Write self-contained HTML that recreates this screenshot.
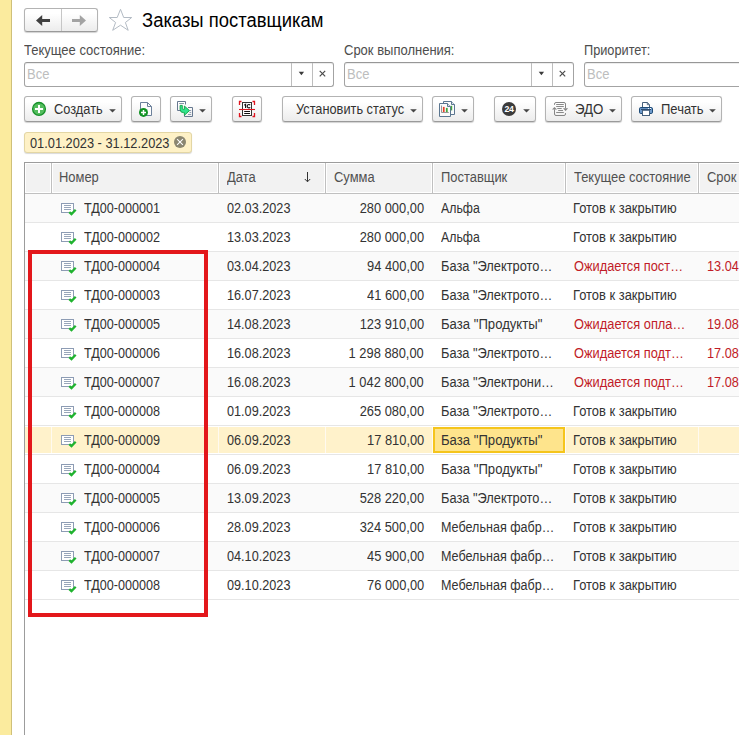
<!DOCTYPE html>
<html><head><meta charset="utf-8"><title>Заказы поставщикам</title>
<style>
*{box-sizing:border-box;margin:0;padding:0}
html,body{width:739px;height:735px;overflow:hidden;background:#fff}
body{font-family:"Liberation Sans",sans-serif;font-size:13px;color:#333;position:relative}
.abs{position:absolute}
.x{display:inline-block;font-size:14px;letter-spacing:0;transform-origin:0 50%;white-space:nowrap}
.xr{transform-origin:100% 50%}
#side{left:0;top:0;width:12px;height:735px;background:#fbeb9e;border-right:1px solid #cfc07a}
.btn{position:absolute;top:96px;height:26px;border:1px solid #b3b3b3;border-bottom-color:#9a9a9a;border-radius:3px;background:linear-gradient(#ffffff 20%,#ececec);box-shadow:0 1px 1px rgba(0,0,0,.18);font-size:13px;color:#333;white-space:nowrap}
.btn .lbl{position:absolute;top:5px;line-height:15px;letter-spacing:-0.12px}
.lab{position:absolute;font-size:13px;color:#4d4d4d;line-height:15px;white-space:nowrap;letter-spacing:0}
.inp{position:absolute;top:62px;height:25px;border:1px solid #a3a3a3;border-top-color:#979797;border-radius:3px;background:#fff;box-shadow:inset 0 1px 0 rgba(0,0,0,.07)}
.inp .ph{position:absolute;left:2px;top:4px;color:#bdbdbd;font-size:13px;line-height:15px}
.inp .dv{position:absolute;top:0;width:1px;height:23px;background:#bdbdbd}
#title{left:141.700px;top:9px;font-size:20px;transform:scaleX(.922);transform-origin:0 50%;line-height:22px;color:#000;white-space:nowrap}
#tag{left:24px;top:132px;width:168px;height:21px;background:#fef1c6;border:1px solid #e3d6a4;border-radius:3px;font-size:13px;line-height:21px;padding-left:5px;color:#333;white-space:nowrap;box-shadow:0 1px 1px rgba(0,0,0,.15);letter-spacing:-0.1px}
#tbl{left:24px;top:162px;width:715px;height:573px;border-left:1px solid #9c9c9c;border-top:1px solid #9c9c9c;overflow:hidden}
#hdr{position:absolute;left:0;top:0;width:714px;height:31px;background:#f2f2f2;border-bottom:1px solid #c0c0c0}
.h{position:absolute;top:0;height:30px;border-right:1px solid #c0c0c0;box-shadow:inset 1px 1px 0 #fff,inset -1px -1px 0 #fff;font-size:13px;line-height:29px;color:#505050;padding-left:8px;white-space:nowrap;overflow:hidden;letter-spacing:-0.05px}
.row{position:absolute;left:25px;width:714px;height:29px;border-bottom:1px solid #e6e6e6;background:#fff;font-size:13px;line-height:28px;color:#333;white-space:nowrap}
.row.alt{background:#fafafa}
.c{position:absolute;top:0;height:28px;overflow:hidden;letter-spacing:-0.1px}
.c1{left:27px;width:166px}
.c1 .ic{position:absolute;left:9px;top:9px}
.c1 .t{position:absolute;left:32px;letter-spacing:-0.24px}
.c2{left:194px;width:106px;padding-left:8px;letter-spacing:-0.18px}
.c3{left:301px;width:106px;text-align:right;padding-right:8px;letter-spacing:-0.07px}
.c4{left:408px;width:132px;padding-left:8px}
.c5{left:541px;width:133px;padding-left:7px}
.c6{left:674px;width:40px;padding-left:8px;letter-spacing:-0.18px}
.red{color:#c11c28}
.row.sel{background:#fff}
.row.sel .bg{position:absolute;left:0;top:1px;width:714px;height:26px;background:#fff2cb}
.row.sel .vl{position:absolute;top:1px;width:1px;height:26px;background:#fffaf0}
.sel .cur{background:#fee48c;border:2px solid #f5c51c;top:1px;height:26px;line-height:22px;padding-left:6px}
#redbox{left:28px;top:250px;width:180px;height:367px;border:4px solid #e3171b}
</style></head><body>
<div id="side" class="abs"></div>

<!-- nav buttons -->
<div class="btn" style="left:24px;top:8px;width:74px;height:24px">
 <div class="abs" style="left:36px;top:0;width:1px;height:22px;background:#c6c6c6"></div>
</div>
<div id="title" class="abs">Заказы поставщикам</div>

<!-- filters -->
<div class="lab" style="left:24px;top:43px"><span class="x" style="transform:scaleX(0.9286)">Текущее состояние:</span></div>
<div class="lab" style="left:344px;top:43px"><span class="x" style="transform:scaleX(0.9286)">Срок выполнения:</span></div>
<div class="lab" style="left:584px;top:43px"><span class="x" style="transform:scaleX(0.9100)">Приоритет:</span></div>

<div class="inp" style="left:24px;width:310px"><span class="ph"><span class="x" style="transform:scaleX(0.9288)">Все</span></span><div class="dv" style="left:266px"></div><div class="dv" style="left:287px"></div></div>
<div class="inp" style="left:344px;width:230px"><span class="ph"><span class="x" style="transform:scaleX(0.9288)">Все</span></span><div class="dv" style="left:186px"></div><div class="dv" style="left:207px"></div></div>
<div class="inp" style="left:584px;width:170px"><span class="ph"><span class="x" style="transform:scaleX(0.9288)">Все</span></span></div>

<!-- toolbar -->
<div class="btn" style="left:24px;width:98px"><span class="lbl" style="left:28.500px"><span class="x" style="transform:scaleX(0.9148)">Создать</span></span></div>
<div class="btn" style="left:131px;width:30px"></div>
<div class="btn" style="left:170px;width:42px"></div>
<div class="btn" style="left:232px;width:30px"></div>
<div class="btn" style="left:282px;width:141px"><span class="lbl" style="left:13px"><span class="x" style="transform:scaleX(0.9125)">Установить статус</span></span></div>
<div class="btn" style="left:432px;width:42px"></div>
<div class="btn" style="left:494px;width:42px"></div>
<div class="btn" style="left:545px;width:77px"><span class="lbl" style="left:28.500px"><span class="x" style="transform:scaleX(0.9486)">ЭДО</span></span></div>
<div class="btn" style="left:631px;width:91px"><span class="lbl" style="left:29px"><span class="x" style="transform:scaleX(0.9285)">Печать</span></span></div>

<div id="tag" class="abs"><span class="x" style="transform:scaleX(0.9142)">01.01.2023 - 31.12.2023</span></div>

<!-- table -->
<div id="tbl" class="abs">
 <div id="hdr">
  <div class="h" style="left:0;width:27px"></div>
  <div class="h" style="left:27px;width:167px;padding-left:7.400px"><span class="x" style="transform:scaleX(0.9239)">Номер</span></div>
  <div class="h" style="left:194px;width:107px"><span class="x" style="transform:scaleX(0.9236)">Дата</span></div>
  <div class="h" style="left:301px;width:107px"><span class="x" style="transform:scaleX(0.9241)">Сумма</span></div>
  <div class="h" style="left:408px;width:133px"><span class="x" style="transform:scaleX(0.9230)">Поставщик</span></div>
  <div class="h" style="left:541px;width:133px"><span class="x" style="transform:scaleX(0.9223)">Текущее состояние</span></div>
  <div class="h" style="left:674px;width:60px"><span class="x" style="transform:scaleX(0.9241)">Срок</span></div>
 </div>
</div>
<div class="row alt" style="top:194px"><span class="c c1"><svg class="ic" width="16" height="13" viewBox="0 0 16 13"><rect x="0.500" y="0.500" width="12" height="9" fill="#fff" stroke="#8d9cb4"/><path d="M3 2.500h7M3 4.500h7M3 6.500h7" stroke="#98a6ba" fill="none"/><path d="M8.300 9.100l2.200 2 4.200-4.300" stroke="#1fb32e" stroke-width="2.300" fill="none"/></svg><span class="t"><span class="x" style="transform:scaleX(0.9001)">ТД00-000001</span></span></span><span class="c c2"><span class="x" style="transform:scaleX(0.9055)">02.03.2023</span></span><span class="c c3"><span class="x xr" style="transform:scaleX(0.9197)">280 000,00</span></span><span class="c c4"><span class="x" style="transform:scaleX(0.8789)">Альфа</span></span><span class="c c5"><span class="x" style="transform:scaleX(0.9232)">Готов к закрытию</span></span><span class="c c6"></span></div>
<div class="row" style="top:223px"><span class="c c1"><svg class="ic" width="16" height="13" viewBox="0 0 16 13"><rect x="0.500" y="0.500" width="12" height="9" fill="#fff" stroke="#8d9cb4"/><path d="M3 2.500h7M3 4.500h7M3 6.500h7" stroke="#98a6ba" fill="none"/><path d="M8.300 9.100l2.200 2 4.200-4.300" stroke="#1fb32e" stroke-width="2.300" fill="none"/></svg><span class="t"><span class="x" style="transform:scaleX(0.9001)">ТД00-000002</span></span></span><span class="c c2"><span class="x" style="transform:scaleX(0.9055)">13.03.2023</span></span><span class="c c3"><span class="x xr" style="transform:scaleX(0.9197)">280 000,00</span></span><span class="c c4"><span class="x" style="transform:scaleX(0.8789)">Альфа</span></span><span class="c c5"><span class="x" style="transform:scaleX(0.9232)">Готов к закрытию</span></span><span class="c c6"></span></div>
<div class="row alt" style="top:252px"><span class="c c1"><svg class="ic" width="16" height="13" viewBox="0 0 16 13"><rect x="0.500" y="0.500" width="12" height="9" fill="#fff" stroke="#8d9cb4"/><path d="M3 2.500h7M3 4.500h7M3 6.500h7" stroke="#98a6ba" fill="none"/><path d="M8.300 9.100l2.200 2 4.200-4.300" stroke="#1fb32e" stroke-width="2.300" fill="none"/></svg><span class="t"><span class="x" style="transform:scaleX(0.9001)">ТД00-000004</span></span></span><span class="c c2"><span class="x" style="transform:scaleX(0.9055)">03.04.2023</span></span><span class="c c3"><span class="x xr" style="transform:scaleX(0.9195)">94 400,00</span></span><span class="c c4"><span class="x" style="transform:scaleX(0.9162)">База &quot;Электрото…</span></span><span class="c c5 red" style="padding-left:7.700px"><span class="x" style="transform:scaleX(0.9168)">Ожидается пост…</span></span><span class="c c6 red"><span class="x" style="transform:scaleX(0.9081)">13.04</span></span></div>
<div class="row" style="top:281px"><span class="c c1"><svg class="ic" width="16" height="13" viewBox="0 0 16 13"><rect x="0.500" y="0.500" width="12" height="9" fill="#fff" stroke="#8d9cb4"/><path d="M3 2.500h7M3 4.500h7M3 6.500h7" stroke="#98a6ba" fill="none"/><path d="M8.300 9.100l2.200 2 4.200-4.300" stroke="#1fb32e" stroke-width="2.300" fill="none"/></svg><span class="t"><span class="x" style="transform:scaleX(0.9001)">ТД00-000003</span></span></span><span class="c c2"><span class="x" style="transform:scaleX(0.9055)">16.07.2023</span></span><span class="c c3"><span class="x xr" style="transform:scaleX(0.9195)">41 600,00</span></span><span class="c c4"><span class="x" style="transform:scaleX(0.9162)">База &quot;Электрото…</span></span><span class="c c5"><span class="x" style="transform:scaleX(0.9232)">Готов к закрытию</span></span><span class="c c6"></span></div>
<div class="row alt" style="top:310px"><span class="c c1"><svg class="ic" width="16" height="13" viewBox="0 0 16 13"><rect x="0.500" y="0.500" width="12" height="9" fill="#fff" stroke="#8d9cb4"/><path d="M3 2.500h7M3 4.500h7M3 6.500h7" stroke="#98a6ba" fill="none"/><path d="M8.300 9.100l2.200 2 4.200-4.300" stroke="#1fb32e" stroke-width="2.300" fill="none"/></svg><span class="t"><span class="x" style="transform:scaleX(0.9001)">ТД00-000005</span></span></span><span class="c c2"><span class="x" style="transform:scaleX(0.9055)">14.08.2023</span></span><span class="c c3"><span class="x xr" style="transform:scaleX(0.9197)">123 910,00</span></span><span class="c c4"><span class="x" style="transform:scaleX(0.9377)">База &quot;Продукты&quot;</span></span><span class="c c5 red" style="padding-left:7.700px"><span class="x" style="transform:scaleX(0.9170)">Ожидается опла…</span></span><span class="c c6 red"><span class="x" style="transform:scaleX(0.9081)">19.08</span></span></div>
<div class="row" style="top:339px"><span class="c c1"><svg class="ic" width="16" height="13" viewBox="0 0 16 13"><rect x="0.500" y="0.500" width="12" height="9" fill="#fff" stroke="#8d9cb4"/><path d="M3 2.500h7M3 4.500h7M3 6.500h7" stroke="#98a6ba" fill="none"/><path d="M8.300 9.100l2.200 2 4.200-4.300" stroke="#1fb32e" stroke-width="2.300" fill="none"/></svg><span class="t"><span class="x" style="transform:scaleX(0.9001)">ТД00-000006</span></span></span><span class="c c2"><span class="x" style="transform:scaleX(0.9055)">16.08.2023</span></span><span class="c c3"><span class="x xr" style="transform:scaleX(0.9191)">1 298 880,00</span></span><span class="c c4"><span class="x" style="transform:scaleX(0.9162)">База &quot;Электрото…</span></span><span class="c c5 red" style="padding-left:7.700px"><span class="x" style="transform:scaleX(0.9169)">Ожидается подт…</span></span><span class="c c6 red"><span class="x" style="transform:scaleX(0.9081)">17.08</span></span></div>
<div class="row alt" style="top:368px"><span class="c c1"><svg class="ic" width="16" height="13" viewBox="0 0 16 13"><rect x="0.500" y="0.500" width="12" height="9" fill="#fff" stroke="#8d9cb4"/><path d="M3 2.500h7M3 4.500h7M3 6.500h7" stroke="#98a6ba" fill="none"/><path d="M8.300 9.100l2.200 2 4.200-4.300" stroke="#1fb32e" stroke-width="2.300" fill="none"/></svg><span class="t"><span class="x" style="transform:scaleX(0.9001)">ТД00-000007</span></span></span><span class="c c2"><span class="x" style="transform:scaleX(0.9055)">16.08.2023</span></span><span class="c c3"><span class="x xr" style="transform:scaleX(0.9191)">1 042 800,00</span></span><span class="c c4"><span class="x" style="transform:scaleX(0.9163)">База &quot;Электрони…</span></span><span class="c c5 red" style="padding-left:7.700px"><span class="x" style="transform:scaleX(0.9169)">Ожидается подт…</span></span><span class="c c6 red"><span class="x" style="transform:scaleX(0.9081)">17.08</span></span></div>
<div class="row" style="top:397px"><span class="c c1"><svg class="ic" width="16" height="13" viewBox="0 0 16 13"><rect x="0.500" y="0.500" width="12" height="9" fill="#fff" stroke="#8d9cb4"/><path d="M3 2.500h7M3 4.500h7M3 6.500h7" stroke="#98a6ba" fill="none"/><path d="M8.300 9.100l2.200 2 4.200-4.300" stroke="#1fb32e" stroke-width="2.300" fill="none"/></svg><span class="t"><span class="x" style="transform:scaleX(0.9001)">ТД00-000008</span></span></span><span class="c c2"><span class="x" style="transform:scaleX(0.9055)">01.09.2023</span></span><span class="c c3"><span class="x xr" style="transform:scaleX(0.9197)">265 080,00</span></span><span class="c c4"><span class="x" style="transform:scaleX(0.9162)">База &quot;Электрото…</span></span><span class="c c5"><span class="x" style="transform:scaleX(0.9232)">Готов к закрытию</span></span><span class="c c6"></span></div>
<div class="row alt sel" style="top:426px"><div class="bg"></div><div class="vl" style="left:26px"></div><div class="vl" style="left:193px"></div><div class="vl" style="left:300px"></div><div class="vl" style="left:407px"></div><div class="vl" style="left:540px"></div><div class="vl" style="left:673px"></div><span class="c c1"><svg class="ic" width="16" height="13" viewBox="0 0 16 13"><rect x="0.500" y="0.500" width="12" height="9" fill="#fff" stroke="#8d9cb4"/><path d="M3 2.500h7M3 4.500h7M3 6.500h7" stroke="#98a6ba" fill="none"/><path d="M8.300 9.100l2.200 2 4.200-4.300" stroke="#1fb32e" stroke-width="2.300" fill="none"/></svg><span class="t"><span class="x" style="transform:scaleX(0.9001)">ТД00-000009</span></span></span><span class="c c2"><span class="x" style="transform:scaleX(0.9055)">06.09.2023</span></span><span class="c c3"><span class="x xr" style="transform:scaleX(0.9195)">17 810,00</span></span><span class="c c4 cur"><span class="x" style="transform:scaleX(0.9377)">База &quot;Продукты&quot;</span></span><span class="c c5"><span class="x" style="transform:scaleX(0.9232)">Готов к закрытию</span></span><span class="c c6"></span></div>
<div class="row" style="top:455px"><span class="c c1"><svg class="ic" width="16" height="13" viewBox="0 0 16 13"><rect x="0.500" y="0.500" width="12" height="9" fill="#fff" stroke="#8d9cb4"/><path d="M3 2.500h7M3 4.500h7M3 6.500h7" stroke="#98a6ba" fill="none"/><path d="M8.300 9.100l2.200 2 4.200-4.300" stroke="#1fb32e" stroke-width="2.300" fill="none"/></svg><span class="t"><span class="x" style="transform:scaleX(0.9001)">ТД00-000004</span></span></span><span class="c c2"><span class="x" style="transform:scaleX(0.9055)">06.09.2023</span></span><span class="c c3"><span class="x xr" style="transform:scaleX(0.9195)">17 810,00</span></span><span class="c c4"><span class="x" style="transform:scaleX(0.9377)">База &quot;Продукты&quot;</span></span><span class="c c5"><span class="x" style="transform:scaleX(0.9232)">Готов к закрытию</span></span><span class="c c6"></span></div>
<div class="row alt" style="top:484px"><span class="c c1"><svg class="ic" width="16" height="13" viewBox="0 0 16 13"><rect x="0.500" y="0.500" width="12" height="9" fill="#fff" stroke="#8d9cb4"/><path d="M3 2.500h7M3 4.500h7M3 6.500h7" stroke="#98a6ba" fill="none"/><path d="M8.300 9.100l2.200 2 4.200-4.300" stroke="#1fb32e" stroke-width="2.300" fill="none"/></svg><span class="t"><span class="x" style="transform:scaleX(0.9001)">ТД00-000005</span></span></span><span class="c c2"><span class="x" style="transform:scaleX(0.9055)">13.09.2023</span></span><span class="c c3"><span class="x xr" style="transform:scaleX(0.9197)">528 220,00</span></span><span class="c c4"><span class="x" style="transform:scaleX(0.9162)">База &quot;Электрото…</span></span><span class="c c5"><span class="x" style="transform:scaleX(0.9232)">Готов к закрытию</span></span><span class="c c6"></span></div>
<div class="row" style="top:513px"><span class="c c1"><svg class="ic" width="16" height="13" viewBox="0 0 16 13"><rect x="0.500" y="0.500" width="12" height="9" fill="#fff" stroke="#8d9cb4"/><path d="M3 2.500h7M3 4.500h7M3 6.500h7" stroke="#98a6ba" fill="none"/><path d="M8.300 9.100l2.200 2 4.200-4.300" stroke="#1fb32e" stroke-width="2.300" fill="none"/></svg><span class="t"><span class="x" style="transform:scaleX(0.9001)">ТД00-000006</span></span></span><span class="c c2"><span class="x" style="transform:scaleX(0.9055)">28.09.2023</span></span><span class="c c3"><span class="x xr" style="transform:scaleX(0.9197)">324 500,00</span></span><span class="c c4"><span class="x" style="transform:scaleX(0.8975)">Мебельная фабр…</span></span><span class="c c5"><span class="x" style="transform:scaleX(0.9232)">Готов к закрытию</span></span><span class="c c6"></span></div>
<div class="row alt" style="top:542px"><span class="c c1"><svg class="ic" width="16" height="13" viewBox="0 0 16 13"><rect x="0.500" y="0.500" width="12" height="9" fill="#fff" stroke="#8d9cb4"/><path d="M3 2.500h7M3 4.500h7M3 6.500h7" stroke="#98a6ba" fill="none"/><path d="M8.300 9.100l2.200 2 4.200-4.300" stroke="#1fb32e" stroke-width="2.300" fill="none"/></svg><span class="t"><span class="x" style="transform:scaleX(0.9001)">ТД00-000007</span></span></span><span class="c c2"><span class="x" style="transform:scaleX(0.9055)">04.10.2023</span></span><span class="c c3"><span class="x xr" style="transform:scaleX(0.9195)">45 900,00</span></span><span class="c c4"><span class="x" style="transform:scaleX(0.8975)">Мебельная фабр…</span></span><span class="c c5"><span class="x" style="transform:scaleX(0.9232)">Готов к закрытию</span></span><span class="c c6"></span></div>
<div class="row" style="top:571px"><span class="c c1"><svg class="ic" width="16" height="13" viewBox="0 0 16 13"><rect x="0.500" y="0.500" width="12" height="9" fill="#fff" stroke="#8d9cb4"/><path d="M3 2.500h7M3 4.500h7M3 6.500h7" stroke="#98a6ba" fill="none"/><path d="M8.300 9.100l2.200 2 4.200-4.300" stroke="#1fb32e" stroke-width="2.300" fill="none"/></svg><span class="t"><span class="x" style="transform:scaleX(0.9001)">ТД00-000008</span></span></span><span class="c c2"><span class="x" style="transform:scaleX(0.9055)">09.10.2023</span></span><span class="c c3"><span class="x xr" style="transform:scaleX(0.9195)">76 000,00</span></span><span class="c c4"><span class="x" style="transform:scaleX(0.8975)">Мебельная фабр…</span></span><span class="c c5"><span class="x" style="transform:scaleX(0.9232)">Готов к закрытию</span></span><span class="c c6"></span></div>
<div id="redbox" class="abs"></div>

<!-- icon overlay in page coordinates -->
<svg class="abs" style="left:0;top:0" width="739" height="735" viewBox="0 0 739 735">
<!-- nav arrows -->
<path d="M36 20.5L42.200 14.900V19H50V22H42.200V26.100Z" fill="#404040"/>
<path d="M86 20.500L79.800 14.900V19H72V22H79.800V26.100Z" fill="#a3a3a3"/>
<!-- star -->
<path d="M120.500 9.300L123.700 17.500H131.700L125.400 22.500L128.200 30.300L120.500 25.200L112.700 30.300L115.600 22.500L109.300 17.500H117.200Z" fill="#fff" stroke="#b3bbc4" stroke-width="1" stroke-linejoin="miter"/>
<!-- input arrows and x -->
<path d="M298.700 71.800H304.100L301.400 75.200Z" fill="#3a3a3a"/>
<path d="M319.700 70.800L325.200 76.300M325.200 70.800L319.700 76.300" stroke="#4a4a4a" stroke-width="1.200" fill="none"/>
<path d="M538.700 71.800H544.100L541.400 75.200Z" fill="#3a3a3a"/>
<path d="M559.700 70.800L565.200 76.300M565.200 70.800L559.700 76.300" stroke="#4a4a4a" stroke-width="1.200" fill="none"/>
<!-- dropdown arrows: R-13..R-6 -->
<path d="M109.200 109.200h6.600l-3.300 3.200z" fill="#454545"/>
<path d="M199.200 109.200h6.600l-3.300 3.200z" fill="#454545"/>
<path d="M410.200 109.200h6.600l-3.300 3.200z" fill="#454545"/>
<path d="M461.200 109.200h6.600l-3.300 3.200z" fill="#454545"/>
<path d="M523.200 109.200h6.600l-3.300 3.200z" fill="#454545"/>
<path d="M609.200 109.200h6.600l-3.300 3.200z" fill="#454545"/>
<path d="M709.200 109.200h6.600l-3.300 3.200z" fill="#454545"/>
<!-- create: green circle plus -->
<circle cx="39" cy="108.900" r="6.400" fill="#54bd5e" stroke="#17912a" stroke-width="1.300"/>
<path d="M35 108.900H43M39 104.900V112.900" stroke="#fff" stroke-width="2"/>
<!-- b2: doc + plus -->
<path d="M140.500 102.500H147.500L151.500 106.500V115.500H140.500Z" fill="#fdfdfd" stroke="#6c819b"/>
<path d="M147.500 102.500V106.500H151.500" fill="none" stroke="#6c819b"/>
<circle cx="143.500" cy="112.400" r="4.500" fill="#129324"/>
<path d="M141 112.400H146M143.500 109.900V114.900" stroke="#fff" stroke-width="1.500"/>
<!-- b3: two docs + green arrow -->
<path d="M185.500 104.500V101.500H177.500V110.500H180.500" fill="none" stroke="#66788f"/>
<path d="M179.200 103.500H184" stroke="#8796a8"/>
<path d="M188 107.500H192.500V116.500H184.500V115" fill="none" stroke="#66788f"/>
<path d="M189.500 110.500H191.200M189.500 112.500H191.200M188 114.500H191.200" stroke="#8f9db0"/>
<path d="M180.100 105.400H182.300V108.300Q182.300 109.300 183.300 109.300H184.400V106L189.500 110.600L184.400 115.300V112.700H183.600Q180.100 112.700 180.100 109.300Z" fill="#30e48c" stroke="#10a044" stroke-width=".9" stroke-linejoin="round"/>
<!-- b4: scanner -->
<rect x="242.500" y="102.500" width="9" height="13" fill="#fff" stroke="#333"/>
<path d="M241.500 101.500H239.500V105M252.500 101.500H254.500V105M241.500 116.500H239.500V113M252.500 116.500H254.500V113" fill="none" stroke="#e0141e" stroke-width="1.300"/>
<path d="M244.300 105.300L245.600 104.300V108" fill="none" stroke="#111" stroke-width="1.100"/>
<path d="M250.200 105.100A1.700 1.700 0 1 0 250.200 107.300" fill="none" stroke="#111" stroke-width="1.100"/>
<path d="M239 109.500H255" stroke="#e0141e" stroke-width="1.100"/>
<path d="M244.200 111.500H250M244.200 113.500H250" stroke="#111" stroke-width="1.100"/>
<!-- b6: report pages -->
<path d="M443.500 101.500H451.500L454.500 104.500V114.500H443.500Z" fill="#fafbfc" stroke="#5b7690"/>
<path d="M451.500 101.500V104.500H454.500" fill="#dfe6ec" stroke="#5b7690"/>
<rect x="450.600" y="105.800" width="1.600" height="4.600" fill="#45a83c"/>
<path d="M439.500 103.500H447.500L450.500 106.500V116.500H439.500Z" fill="#fafbfc" stroke="#5b7690"/>
<path d="M447.500 103.500V106.500H450.500" fill="#dfe6ec" stroke="#5b7690"/>
<path d="M441.500 105.500V112.500H448.800" fill="none" stroke="#8a8a8a" stroke-width=".9"/>
<rect x="442.900" y="106.900" width="1.700" height="5.100" fill="#ea3f28"/>
<rect x="445.900" y="107.900" width="1.800" height="4.100" fill="#45a83c"/>
<!-- b7: 24 -->
<circle cx="509" cy="109" r="7" fill="#3b3b3b"/>
<text x="509" y="112.200" text-anchor="middle" font-family="Liberation Sans, sans-serif" font-weight="bold" font-size="8.800" letter-spacing="-0.500" fill="#fff">24</text>
<!-- b8: EDO doc with arrows -->
<path d="M554.500 104.800V104Q554.500 102.500 556 102.500H564Q565.500 102.500 565.500 104V108.200" fill="none" stroke="#858585"/>
<path d="M565.500 113.100V114Q565.500 115.500 564 115.500H556Q554.500 115.500 554.500 114V109.400" fill="none" stroke="#858585"/>
<path d="M552 109.600L554.500 106.900L557 109.600Z" fill="#858585"/>
<path d="M563 108.200L565.600 111L568.100 108.200Z" fill="#858585"/>
<path d="M556.200 104.500H563.800M556.200 106.500H563.800M557.300 108.500H561.700M558.200 110.500H563M556.200 112.500H563.800" stroke="#8a8a8a"/>
<!-- b9: printer -->
<path d="M642.500 107.500V102.500H647.300L649.500 104.700V107.500" fill="#fff" stroke="#46607c"/>
<path d="M647.300 102.500V104.700H649.500" fill="none" stroke="#46607c" stroke-width=".9"/>
<rect x="639.500" y="107.500" width="13" height="6" rx="1.300" fill="#6f9bcc" stroke="#1e4b77"/>
<path d="M641 109.400H651" stroke="#1f3f63" stroke-width="1"/>
<rect x="647.900" y="108" width="1" height="1" fill="#fff"/><rect x="650" y="108" width="1" height="1" fill="#fff"/>
<rect x="642.500" y="110.300" width="7" height="5.200" fill="#fff" stroke="#46607c"/>
<!-- tag close -->
<circle cx="180" cy="142" r="6" fill="#8b8670"/>
<path d="M177.100 139.100L182.900 144.900M182.900 139.100L177.100 144.900" stroke="#fff" stroke-width="1.050"/>
<!-- sort arrow -->
<path d="M307.500 172V181.500M304.800 179L307.500 181.800L310.200 179" fill="none" stroke="#333" stroke-width="1"/>

</svg>
</body></html>
